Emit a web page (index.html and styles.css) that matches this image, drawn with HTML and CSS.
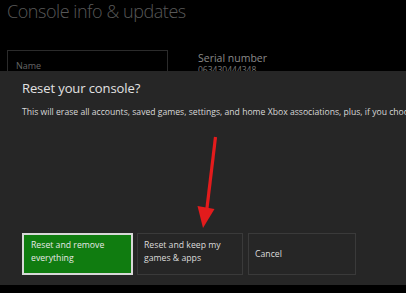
FILE: index.html
```html
<!DOCTYPE html>
<html>
<head>
<meta charset="utf-8">
<link rel="stylesheet" href="styles.css">
</head>
<body>
<div class="page">
  <h1 class="title">Console info &amp; updates</h1>
  <div class="info">
    <div class="name-box"><span class="label">Name</span></div>
    <div class="serial">
      <div class="serial-label">Serial number</div>
      <div class="serial-value">063430444348</div>
    </div>
  </div>
</div>
<div class="dialog">
  <div class="dialog-title">Reset your console?</div>
  <div class="dialog-body">This will erase all accounts, saved games, settings, and home Xbox associations, plus, if you choose, all games and apps.</div>
  <div class="buttons">
    <div class="btn btn-primary b1">Reset and remove<br>everything</div>
    <div class="btn b2">Reset and keep my<br>games &amp; apps</div>
    <div class="btn b3">Cancel</div>
  </div>
</div>
<svg class="arrow" width="406" height="293" viewBox="0 0 406 293">
  <line x1="215.5" y1="137" x2="206.5" y2="212" stroke="#e31b1c" stroke-width="3.2"/>
  <polygon points="197.5,206 214.5,209 203,228" fill="#e31b1c"/>
</svg>
</body>
</html>
```
FILE: styles.css
```css
html, body {
  margin: 0;
  padding: 0;
  background: #000;
  width: 406px;
  height: 293px;
  overflow: hidden;
  font-family: "Open Sans", "Noto Sans", sans-serif;
}
.page {
  padding: 0 7px;
}
.title {
  margin: 0;
  font-weight: 300;
  font-size: 18px;
  line-height: 22px;
  color: #585858;
  letter-spacing: -0.45px;
}
.info {
  display: flex;
  margin-top: 28px;
}
.name-box {
  box-sizing: border-box;
  width: 161px;
  height: 120px;
  border: 1px solid #2b2b2b;
  padding: 9px 8px;
  font-size: 9px;
  line-height: 12px;
}
.label {
  color: #666;
}
.serial {
  margin-left: 30px;
  margin-top: 2px;
}
.serial-label {
  font-size: 10.5px;
  color: #8a8a8a;
  line-height: 12px;
}
.serial-value {
  font-size: 8.5px;
  color: #777;
  line-height: 11px;
}
.dialog {
  position: absolute;
  left: 0;
  top: 71px;
  width: 406px;
  height: 214px;
  background: #262626;
  box-sizing: border-box;
  padding: 7px 0 0 22px;
  overflow: hidden;
}
.dialog-title {
  font-size: 13px;
  line-height: 20px;
  color: #e2e2e2;
  letter-spacing: -0.1px;
}
.dialog-body {
  margin-top: 8px;
  font-size: 8.65px;
  line-height: 12px;
  color: #d8d8d8;
  white-space: nowrap;
}
.buttons {
  display: flex;
  gap: 4px;
  margin-top: 115px;
}
.btn {
  box-sizing: border-box;
  height: 42px;
  border: 1px solid #3a3a3a;
  font-size: 8.7px;
  line-height: 13px;
  color: #dcdcdc;
  padding: 3px 0 0 6px;
}
.b1 { width: 111px; }
.b2 { width: 106px; padding-top: 5px; }
.b3 { width: 108px; margin-left: 1px; display: flex; align-items: center; padding-top: 0; }
.btn-primary {
  background: #107c10;
  border: 2px solid #d8d8d8;
  color: #e8e8e8;
  padding: 4px 0 0 7px;
}
.arrow {
  position: absolute;
  left: 0;
  top: 0;
}
```
